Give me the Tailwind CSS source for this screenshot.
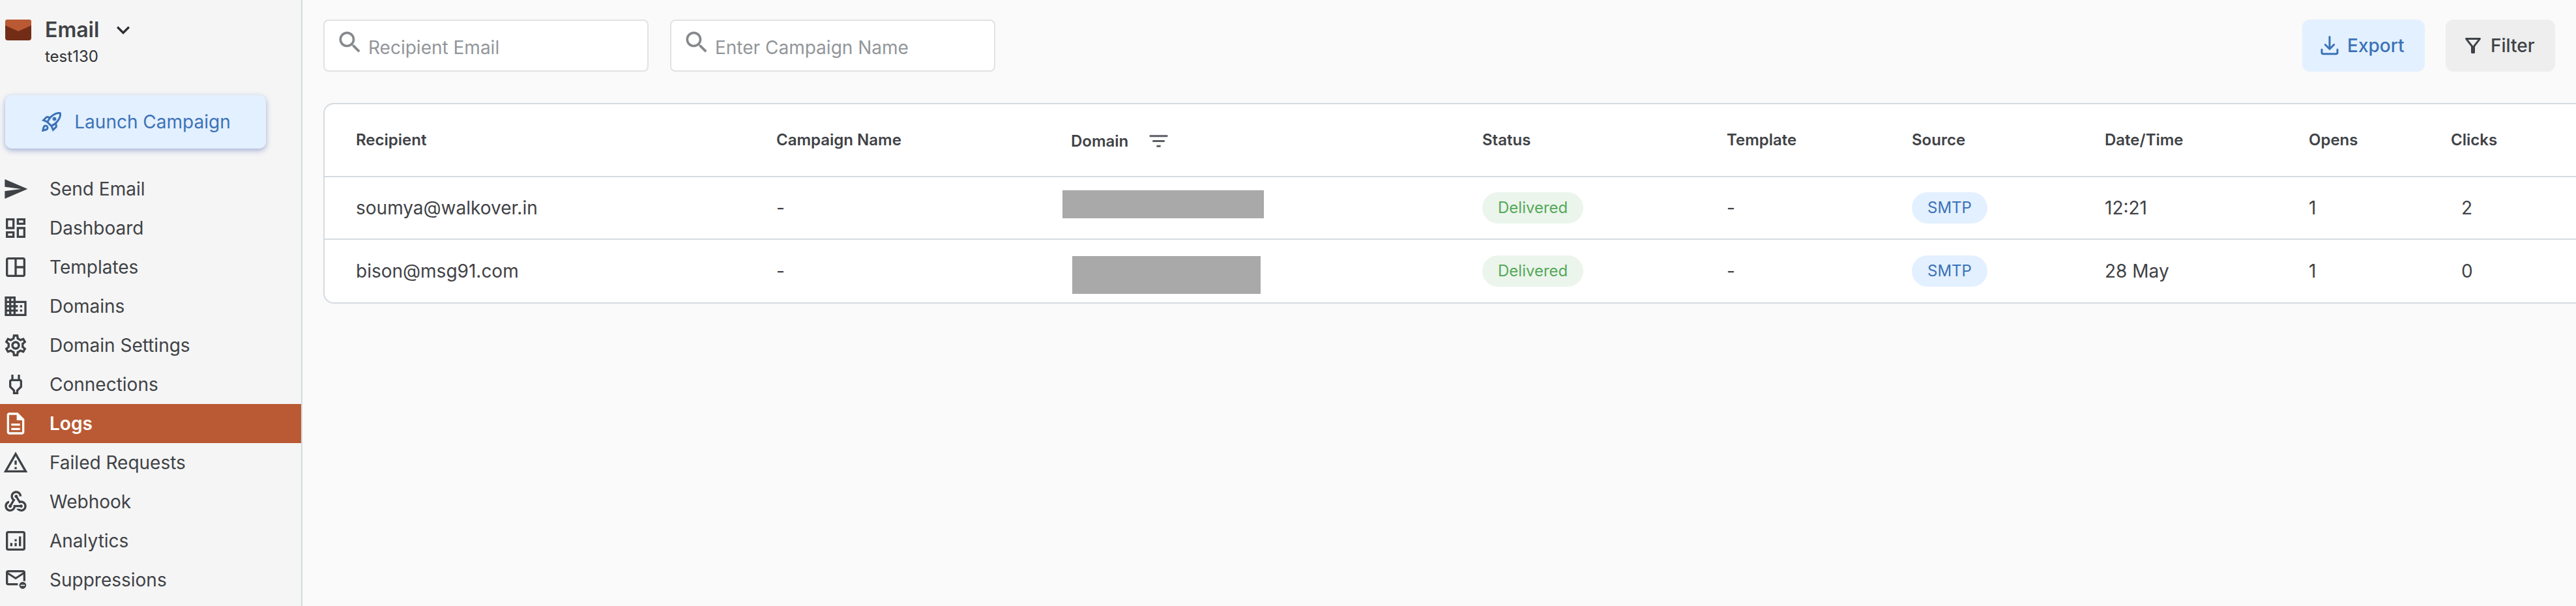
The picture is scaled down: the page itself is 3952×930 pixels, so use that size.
<!DOCTYPE html>
<html lang="en">
<head>
<meta charset="utf-8">
<title>Logs</title>
<script src="https://cdn.jsdelivr.net/npm/@tailwindcss/browser@4"></script>
</head>
<body class="font-['Inter','Liberation_Sans',sans-serif] bg-[#fafafa] text-[#3f4246] overflow-hidden">
<div class="flex w-[3952px] h-[930px] overflow-hidden">
  <aside class="w-[464px] h-[930px] shrink-0 bg-[#f5f5f5] border-r-2 border-[#d5dbe0] overflow-hidden">
    <div class="flex pl-[8px] pt-[30px] h-[116px]">
      <svg class="w-[40px] h-[32px] shrink-0" viewBox="0 0 40 32"><rect width="40" height="32" rx="4" fill="#732d16"/><path d="M0 4a4 4 0 0 1 4-4h32a4 4 0 0 1 4 4v5L20 18 0 9z" fill="#b95a34"/></svg>
      <div class="ml-[21px] -mt-[2px]">
        <div class="flex items-center h-[36px]">
          <span class="text-[32px] leading-[36px] font-semibold text-[#3f4246]">Email</span>
          <svg class="w-[40px] h-[40px] ml-[17px] fill-[#2b2d30]" viewBox="0 0 24 24"><path d="M16.59 8.59 12 13.17 7.41 8.59 6 10l6 6 6-6z"/></svg>
        </div>
        <div class="text-[24px] leading-[32px] mt-[7px] text-[#2f3134]">test130</div>
      </div>
    </div>
    <button class="ml-[8px] mt-[30px] w-[400px] h-[82px] rounded-[10px] bg-[#e3f0ff] text-[#3b72b8] flex items-center justify-center gap-[17px] pr-[1px] text-[28px] shadow-[0_3px_8px_rgba(59,90,170,0.45)]">
      <svg class="w-[36px] h-[36px] fill-[#3b72b8]" viewBox="0 0 24 24"><path d="M6 15c-.83 0-1.58.34-2.12.88C2.7 17.06 2 22 2 22s4.94-.7 6.12-1.88c.54-.54.88-1.29.88-2.12 0-1.66-1.34-3-3-3zm.71 3.71c-.28.28-2.17.76-2.17.76s.47-1.88.76-2.17c.17-.19.42-.3.7-.3.55 0 1 .45 1 1 0 .28-.11.53-.29.71zm10.71-5.06c6.36-6.36 4.24-11.31 4.24-11.31S16.71.22 10.35 6.58l-2.49-.5c-.65-.13-1.33.08-1.81.55L2 10.69l5 2.14L11.17 17l2.14 5 4.05-4.05c.47-.47.68-1.15.55-1.81l-.49-2.49zM7.41 10.83l-1.91-.82 1.97-1.97 1.44.29c-.57.83-1.08 1.7-1.5 2.5zm6.58 7.67-.82-1.91c.8-.42 1.67-.93 2.49-1.5l.29 1.44-1.96 1.97zM16 12.24c-1.32 1.32-3.38 2.4-4.04 2.73l-2.93-2.93c.32-.65 1.4-2.71 2.73-4.04 4.68-4.68 8.23-3.99 8.23-3.99s.69 3.55-3.99 8.23zM15 11c1.1 0 2-.9 2-2s-.9-2-2-2-2 .9-2 2 .9 2 2 2z"/></svg>
      <span>Launch Campaign</span>
    </button>
    <nav class="mt-[32px] text-[28px]">
      <a class="flex items-center h-[60px] pl-[4px]"><svg class="w-[40px] h-[40px] fill-[#3f4246]" viewBox="0 0 24 24"><path d="M2.01 21 23 12 2.01 3 2 10l15 2-15 2z"/></svg><span class="ml-[32px]">Send Email</span></a>
      <a class="flex items-center h-[60px] pl-[4px]"><svg class="w-[40px] h-[40px] fill-[#3f4246]" viewBox="0 0 24 24"><path d="M19 5v2h-4V5h4M9 5v6H5V5h4m10 8v6h-4v-6h4M9 17v2H5v-2h4M21 3h-8v6h8V3zM11 3H3v10h8V3zm10 8h-8v10h8V11zm-10 4H3v6h8v-6z"/></svg><span class="ml-[32px]">Dashboard</span></a>
      <a class="flex items-center h-[60px] pl-[4px]"><svg class="w-[40px] h-[40px] fill-[#3f4246]" viewBox="0 0 24 24"><path d="M19 3H5c-1.1 0-2 .9-2 2v14c0 1.1.9 2 2 2h14c1.1 0 2-.9 2-2V5c0-1.1-.9-2-2-2zM5 19V5h6v14H5zm14 0h-6v-6h6v6zm0-8h-6V5h6v6z"/></svg><span class="ml-[32px]">Templates</span></a>
      <a class="flex items-center h-[60px] pl-[4px]"><svg class="w-[40px] h-[40px] fill-[#3f4246]" viewBox="0 0 24 24"><path d="M12 7V3H2v18h20V7H12zM6 19H4v-2h2v2zm0-4H4v-2h2v2zm0-4H4V9h2v2zm0-4H4V5h2v2zm4 12H8v-2h2v2zm0-4H8v-2h2v2zm0-4H8V9h2v2zm0-4H8V5h2v2zm10 12h-8v-2h2v-2h-2v-2h2v-2h-2V9h8v10zm-2-8h-2v2h2v-2zm0 4h-2v2h2v-2z"/></svg><span class="ml-[32px]">Domains</span></a>
      <a class="flex items-center h-[60px] pl-[4px]"><svg class="w-[40px] h-[40px] fill-[#3f4246]" viewBox="0 0 24 24"><path d="M19.43 12.98c.04-.32.07-.64.07-.98 0-.34-.03-.66-.07-.98l2.11-1.65c.19-.15.24-.42.12-.64l-2-3.46c-.09-.16-.26-.25-.44-.25-.06 0-.12.01-.17.03l-2.49 1c-.52-.4-1.08-.73-1.69-.98l-.38-2.65C14.46 2.18 14.25 2 14 2h-4c-.25 0-.46.18-.49.42l-.38 2.65c-.61.25-1.17.59-1.69.98l-2.49-1c-.06-.02-.12-.03-.18-.03-.17 0-.34.09-.43.25l-2 3.46c-.13.22-.07.49.12.64l2.11 1.65c-.04.32-.07.65-.07.98 0 .33.03.66.07.98l-2.11 1.65c-.19.15-.24.42-.12.64l2 3.46c.09.16.26.25.44.25.06 0 .12-.01.17-.03l2.49-1c.52.4 1.08.73 1.69.98l.38 2.65c.03.24.24.42.49.42h4c.25 0 .46-.18.49-.42l.38-2.65c.61-.25 1.17-.59 1.69-.98l2.49 1c.06.02.12.03.18.03.17 0 .34-.09.43-.25l2-3.46c.12-.22.07-.49-.12-.64l-2.11-1.65zm-1.98-1.71c.04.31.05.52.05.73 0 .21-.02.43-.05.73l-.14 1.13.89.7 1.08.84-.7 1.21-1.27-.51-1.04-.42-.9.68c-.43.32-.84.56-1.25.73l-1.06.43-.16 1.13-.2 1.35h-1.4l-.19-1.35-.16-1.13-1.06-.43c-.43-.18-.83-.41-1.23-.71l-.91-.7-1.06.43-1.27.51-.7-1.21 1.08-.84.89-.7-.14-1.13c-.03-.31-.05-.54-.05-.74s.02-.43.05-.73l.14-1.13-.89-.7-1.08-.84.7-1.21 1.27.51 1.04.42.9-.68c.43-.32.84-.56 1.25-.73l1.06-.43.16-1.13.2-1.35h1.39l.19 1.35.16 1.13 1.06.43c.43.18.83.41 1.23.71l.91.7 1.06-.43 1.27-.51.7 1.21-1.07.85-.89.7.14 1.13zM12 8c-2.21 0-4 1.79-4 4s1.79 4 4 4 4-1.79 4-4-1.79-4-4-4zm0 6c-1.1 0-2-.9-2-2s.9-2 2-2 2 .9 2 2-.9 2-2 2z"/></svg><span class="ml-[32px]">Domain Settings</span></a>
      <a class="flex items-center h-[60px] pl-[4px]"><svg class="w-[40px] h-[40px] fill-[#3f4246]" viewBox="0 0 24 24"><path d="M16.01 7 16 3h-2v4h-4V3H8v4h-.01C7 6.99 6 7.99 6 8.99v5.49L9.5 18v3h5v-3l3.5-3.51v-5.5c0-1-1-2-1.99-1.99zM16 13.65l-3.5 3.52V19h-1v-1.83L8 13.65V9.01h8v4.64z"/></svg><span class="ml-[32px]">Connections</span></a>
      <a class="flex items-center h-[60px] pl-[4px] bg-[#b95a34] text-white font-semibold"><svg class="w-[40px] h-[40px] fill-white" viewBox="0 0 24 24"><path d="M8 16h8v2H8zm0-4h8v2H8zm6-10H6c-1.1 0-2 .9-2 2v16c0 1.1.89 2 1.99 2H18c1.1 0 2-.9 2-2V8l-6-6zm4 18H6V4h7v5h5v11z"/></svg><span class="ml-[32px]">Logs</span></a>
      <a class="flex items-center h-[60px] pl-[4px]"><svg class="w-[40px] h-[40px] fill-[#3f4246]" viewBox="0 0 24 24"><path d="M12 5.99 19.53 19H4.47L12 5.99M12 2 1 21h22L12 2zm1 14h-2v2h2v-2zm0-6h-2v4h2v-4z"/></svg><span class="ml-[32px]">Failed Requests</span></a>
      <a class="flex items-center h-[60px] pl-[4px]"><svg class="w-[40px] h-[40px] fill-[#3f4246]" viewBox="0 0 24 24"><path d="M10 15h5.88c.27-.31.67-.5 1.12-.5.83 0 1.5.67 1.5 1.5s-.67 1.5-1.5 1.5c-.44 0-.84-.19-1.12-.5H11.9c-.46 2.28-2.48 4-4.9 4-2.76 0-5-2.24-5-5 0-2.42 1.72-4.44 4-4.9v2.07c-1.16.41-2 1.53-2 2.83 0 1.65 1.35 3 3 3s3-1.35 3-3v-1zm2.5-11c1.65 0 3 1.35 3 3h2c0-2.76-2.24-5-5-5s-5 2.24-5 5c0 1.43.6 2.71 1.55 3.62l-2.35 3.9c-.68.14-1.2.75-1.2 1.48 0 .83.67 1.5 1.5 1.5s1.5-.67 1.5-1.5c0-.16-.02-.31-.07-.45l3.38-5.63C10.49 9.61 9.5 8.42 9.5 7c0-1.65 1.35-3 3-3zm4.5 9c-.64 0-1.23.2-1.72.54l-3.05-5.07C11.53 8.35 11 7.74 11 7c0-.83.67-1.5 1.5-1.5S14 6.17 14 7c0 .15-.02.29-.06.43l2.19 3.65c.28-.05.57-.08.87-.08 2.76 0 5 2.24 5 5s-2.24 5-5 5c-1.85 0-3.47-1.01-4.33-2.5h2.67c.48.32 1.05.5 1.66.5 1.65 0 3-1.35 3-3s-1.35-3-3-3z"/></svg><span class="ml-[32px]">Webhook</span></a>
      <a class="flex items-center h-[60px] pl-[4px]"><svg class="w-[40px] h-[40px] fill-[#3f4246]" viewBox="0 0 24 24"><path d="M19 3H5C3.9 3 3 3.9 3 5v14c0 1.1.9 2 2 2h14c1.1 0 2-.9 2-2V5C21 3.9 20.1 3 19 3zM19 19H5V5h14v14zM7 14h2v3H7zM15 8h2v9h-2zM11 14h2v3h-2zM11 10.5h2v2h-2z"/></svg><span class="ml-[32px]">Analytics</span></a>
      <a class="flex items-center h-[60px] pl-[4px]"><svg class="w-[40px] h-[40px] fill-[#3f4246]" viewBox="0 0 24 24"><path d="M19 3H5c-1.1 0-2 .9-2 2v10c0 1.1.9 2 2 2h9v-2H5V7l7 4.5L19 7v6h2V5c0-1.1-.9-2-2-2zm-7 6.5L5 5h14z"/><circle cx="18.5" cy="17" r="3.2"/><rect x="16.6" y="16.5" width="3.8" height="1" fill="#f5f5f5"/></svg><span class="ml-[32px]">Suppressions</span></a>
    </nav>
  </aside>

  <main class="flex-1 min-w-0 overflow-hidden bg-[#fafafa]">
    <div class="flex items-start pl-[32px] pr-[32px] pt-[30px] h-[158px]">
      <div class="w-[499px] h-[80px] bg-white border-2 border-[#e0e2e4] rounded-[8px] flex items-center pl-[17px]">
        <svg class="w-[44px] h-[44px] -mt-[11px] fill-[#85898d] shrink-0" viewBox="0 0 24 24"><path d="M15.5 14h-.79l-.28-.27C15.41 12.59 16 11.11 16 9.5 16 5.91 13.09 3 9.5 3S3 5.91 3 9.5 5.91 16 9.5 16c1.61 0 3.09-.59 4.23-1.57l.27.28v.79l5 4.99L20.49 19l-4.99-5zm-6 0C7.01 14 5 11.99 5 9.5S7.01 5 9.5 5 14 7.01 14 9.5 11.99 14 9.5 14z"/></svg>
        <span class="ml-[6px] mt-[6px] text-[28px] text-[#92969a]">Recipient Email</span>
      </div>
      <div class="ml-[33px] w-[499px] h-[80px] bg-white border-2 border-[#e0e2e4] rounded-[8px] flex items-center pl-[17px]">
        <svg class="w-[44px] h-[44px] -mt-[11px] fill-[#85898d] shrink-0" viewBox="0 0 24 24"><path d="M15.5 14h-.79l-.28-.27C15.41 12.59 16 11.11 16 9.5 16 5.91 13.09 3 9.5 3S3 5.91 3 9.5 5.91 16 9.5 16c1.61 0 3.09-.59 4.23-1.57l.27.28v.79l5 4.99L20.49 19l-4.99-5zm-6 0C7.01 14 5 11.99 5 9.5S7.01 5 9.5 5 14 7.01 14 9.5 11.99 14 9.5 14z"/></svg>
        <span class="ml-[6px] mt-[6px] text-[28px] text-[#92969a]">Enter Campaign Name</span>
      </div>
      <div class="ml-auto flex gap-[32px]">
        <button class="w-[188px] h-[80px] rounded-[12px] bg-[#e3f0ff] text-[#3b72b8] text-[28px] font-medium flex items-center pl-[24px]">
          <svg class="w-[36px] h-[36px] shrink-0" viewBox="0 0 24 24" fill="none" stroke="#3b72b8" stroke-width="2" stroke-linecap="round" stroke-linejoin="round"><path d="M4 16v3a1.5 1.5 0 0 0 1.5 1.5h13a1.5 1.5 0 0 0 1.5-1.5v-3"/><path d="M7.5 11l4.5 4.5 4.5-4.5"/><path d="M12 3v12"/></svg>
          <span class="ml-[9px]">Export</span>
        </button>
        <button class="w-[168px] h-[80px] rounded-[12px] bg-[#eeeeee] text-[#3f4246] text-[28px] font-medium flex items-center pl-[24px]">
          <svg class="w-[36px] h-[36px] fill-[#3f4246] shrink-0" viewBox="0 0 24 24"><path d="M7 6h10l-5.01 6.3L7 6zm-2.75-.39C6.27 8.2 10 13 10 13v6c0 .55.45 1 1 1h2c.55 0 1-.45 1-1v-6s3.72-4.8 5.74-7.39c.51-.66.04-1.61-.79-1.61H5.04c-.83 0-1.3.95-.79 1.61z"/></svg>
          <span class="ml-[9px]">Filter</span>
        </button>
      </div>
    </div>

    <div class="ml-[32px] w-[3600px] h-[308px] bg-white border-2 border-[#d5dbe0] rounded-[16px] text-[28px]">
      <div class="grid grid-cols-[645px_452px_631px_375px_284px_296px_313px_218px_1fr] pl-[48px] h-[110px] items-center text-[24px] font-semibold border-b-0">
        <div>Recipient</div>
        <div>Campaign Name</div>
        <div class="flex items-center h-[37px] mt-[4px]"><span>Domain</span><svg class="w-[37px] h-[37px] ml-[28px] fill-[#5a5e63] -mt-[1px]" viewBox="0 0 24 24"><path d="M10 18h4v-2h-4v2zM3 6v2h18V6H3zm3 7h12v-2H6v2z"/></svg></div>
        <div>Status</div>
        <div>Template</div>
        <div>Source</div>
        <div>Date/Time</div>
        <div>Opens</div>
        <div>Clicks</div>
      </div>
      <div class="grid grid-cols-[645px_452px_631px_375px_284px_296px_313px_218px_1fr] pl-[48px] h-[94px] items-center border-t-2 border-[#d5dbe0] box-content">
        <div>soumya@walkover.in</div>
        <div>-</div>
        <div class="relative h-full"><div class="absolute left-[-13px] top-[20px] w-[309px] h-[43px] bg-[#a9a9a9]"></div></div>
        <div><span class="inline-flex items-center h-[48px] px-[24px] rounded-full bg-[#ebf5ec] text-[#55a85a] text-[24px]">Delivered</span></div>
        <div>-</div>
        <div><span class="inline-flex items-center h-[48px] px-[24px] rounded-full bg-[#e3f0ff] text-[#3b72b8] text-[24px]">SMTP</span></div>
        <div>12:21</div>
        <div>1</div>
        <div class="pl-[16px]">2</div>
      </div>
      <div class="grid grid-cols-[645px_452px_631px_375px_284px_296px_313px_218px_1fr] pl-[48px] h-[96px] items-center border-t-2 border-[#d5dbe0] box-content">
        <div>bison@msg91.com</div>
        <div>-</div>
        <div class="relative h-full"><div class="absolute left-[2px] top-[25px] w-[289px] h-[58px] bg-[#a9a9a9]"></div></div>
        <div><span class="inline-flex items-center h-[48px] px-[24px] rounded-full bg-[#ebf5ec] text-[#55a85a] text-[24px]">Delivered</span></div>
        <div>-</div>
        <div><span class="inline-flex items-center h-[48px] px-[24px] rounded-full bg-[#e3f0ff] text-[#3b72b8] text-[24px]">SMTP</span></div>
        <div>28 May</div>
        <div>1</div>
        <div class="pl-[16px]">0</div>
      </div>
    </div>
  </main>
</div>
</body>
</html>
